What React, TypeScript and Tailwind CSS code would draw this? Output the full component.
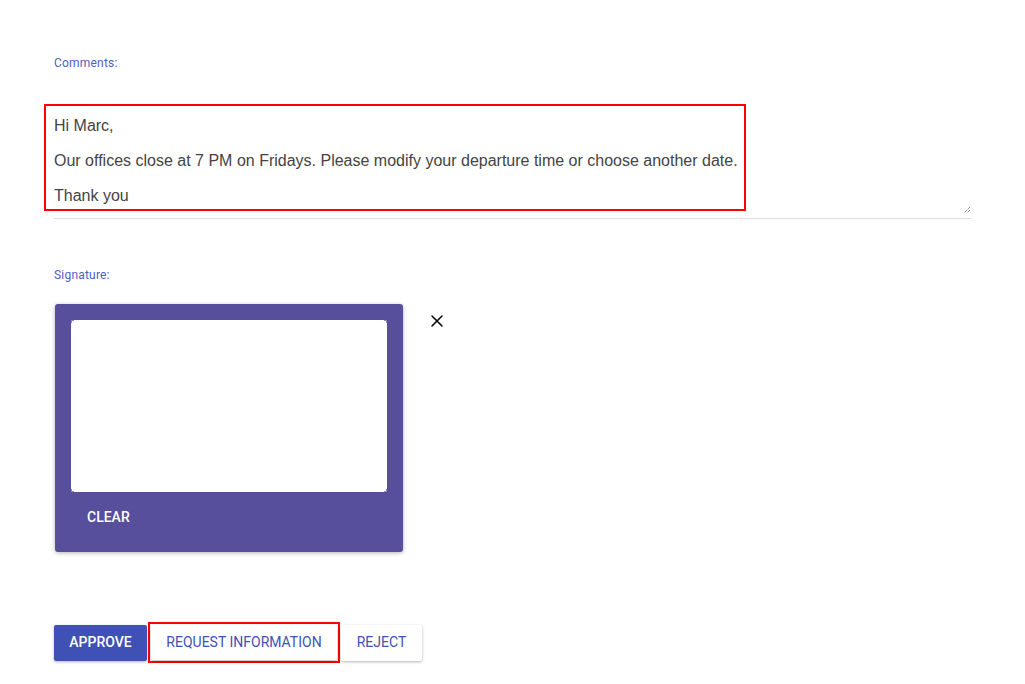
import { X } from "lucide-react";

const App: React.FC = () => {
  return (
    <div className="min-h-screen w-full bg-white font-['Roboto',sans-serif]">
      <div className="pl-[54px] pt-[56px] w-[971px]">
        {/* Comments */}
        <label className="block text-[12px] leading-[14px] text-[#4f5fc4] tracking-[0.2px]">
          Comments:
        </label>

        <div className="mt-[34px] relative">
          <div className="-ml-[10px] w-[702px] h-[107px] border-2 border-[#ff0000] pl-[8px] pt-[11px] font-['Liberation_Sans',Arial,sans-serif] text-[16px] leading-[17.6px] text-[#444]">
            <p>Hi Marc,</p>
            <p className="mt-[17px]">
              Our offices close at 7 PM on Fridays. Please modify your departure time or choose another date.
            </p>
            <p className="mt-[18px]">Thank you</p>
          </div>
          {/* resize grip */}
          <svg className="absolute right-[0px] top-[102px]" width="8" height="8" viewBox="0 0 8 8">
            <path d="M7 1 L1 7 M7 4 L4 7" stroke="#555" strokeWidth="1" strokeDasharray="1 1" />
          </svg>
          <div className="mt-[7px] h-px bg-[#dcdcdc]" />
        </div>

        {/* Signature */}
        <label className="block mt-[49px] text-[12px] leading-[14px] text-[#4f5fc4] tracking-[0.2px]">
          Signature:
        </label>

        <div className="mt-[22px] flex items-start">
          <div className="ml-px w-[348px] h-[248px] rounded-[3px] bg-[#574f9b] shadow-[0_1px_4px_rgba(0,0,0,0.3)] p-[16px] pb-0 flex flex-col">
            <div className="relative h-[172px] bg-white">
              <span className="absolute left-0 top-0 w-[3px] h-px bg-[#8d88bb]" />
              <span className="absolute left-0 top-0 w-px h-[3px] bg-[#8d88bb]" />
              <span className="absolute right-0 top-0 w-[3px] h-px bg-[#8d88bb]" />
              <span className="absolute right-0 top-0 w-px h-[3px] bg-[#8d88bb]" />
              <span className="absolute left-0 bottom-0 w-[3px] h-px bg-[#8d88bb]" />
              <span className="absolute left-0 bottom-0 w-px h-[3px] bg-[#8d88bb]" />
              <span className="absolute right-0 bottom-0 w-[3px] h-px bg-[#8d88bb]" />
              <span className="absolute right-0 bottom-0 w-px h-[3px] bg-[#8d88bb]" />
            </div>
            <div className="pl-[16px] pt-[17px] text-[14px] leading-[16px] font-medium text-white">
              CLEAR
            </div>
          </div>
          <button className="ml-[24px] mt-[7px] text-black">
            <X size={20} strokeWidth={1.8} />
          </button>
        </div>

        {/* Actions */}
        <div className="mt-[70px] flex items-center">
          <button className="w-[93px] h-[36px] rounded-[2px] bg-[#3f51b5] text-white text-[14px] font-medium shadow-[0_1px_3px_rgba(0,0,0,0.3)]">
            APPROVE
          </button>
          <div className="ml-px border-2 border-[#ff0000] p-px">
            <button className="w-[186px] h-[35px] rounded-[2px] bg-white text-[#3f51b5] text-[14px] shadow-[0_1px_3px_rgba(0,0,0,0.3)]">
              REQUEST INFORMATION
            </button>
          </div>
          <button className="ml-[1px] w-[81px] h-[36px] rounded-[2px] bg-white text-[#3f51b5] text-[14px] shadow-[0_1px_3px_rgba(0,0,0,0.3)]">
            REJECT
          </button>
        </div>
      </div>
    </div>
  );
};

export default App;
